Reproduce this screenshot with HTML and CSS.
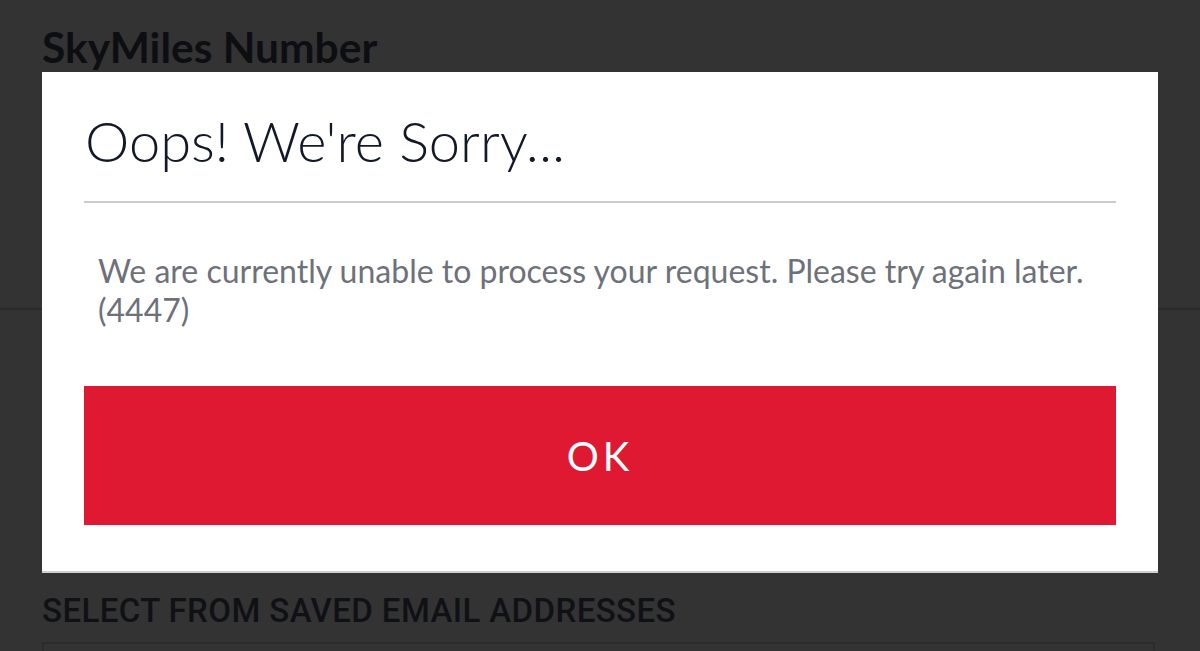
FILE: index.html
```html
<!DOCTYPE html>
<html lang="en">
<head>
    <meta charset="UTF-8">
    <meta name="viewport" content="width=device-width, initial-scale=1.0">
    <title>SkyMiles Number</title>
    <link rel="stylesheet" href="styles.css">
</head>
<body>
    <div class="page">
        <section class="field-block">
            <h2 class="field-title">SkyMiles Number</h2>
        </section>
        <section class="email-block">
            <h3 class="section-label">SELECT FROM SAVED EMAIL ADDRESSES</h3>
            <div class="select-box"></div>
        </section>
    </div>

    <!-- Error dialog shown over the dimmed page -->
    <div class="modal" role="alertdialog">
        <h1 class="modal-title">Oops! We're Sorry...</h1>
        <p class="modal-text">We are currently unable to process your request. Please try again later. (4447)</p>
        <button class="modal-ok">OK</button>
    </div>
</body>
</html>
```

FILE: styles.css
```css
html, body {
    margin: 0;
    height: 100%;
    overflow: hidden;
}
body {
    background-color: #333333;
    font-family: Lato, "Open Sans", Arial, sans-serif;
}
.page {
    display: flex;
    flex-direction: column;
}
.field-block {
    height: 310px;
    border-bottom: 2px solid #2a2a2a;
    box-sizing: border-box;
    padding: 21px 42px 0;
}
.field-title {
    margin: 0;
    font-size: 42.5px;
    font-weight: 700;
    color: #0d0e12;
    line-height: 1.2;
}
.email-block {
    padding: 284px 45px 0 42px;
}
.section-label {
    margin: 0;
    font-family: Roboto, Arial, sans-serif;
    font-size: 33px;
    font-weight: 500;
    letter-spacing: 0.4px;
    color: #101115;
    line-height: 1;
}
.select-box {
    margin-top: 15px;
    height: 8px;
    border: 2px solid #2c2c2c;
    border-bottom: none;
}
.modal {
    position: absolute;
    top: 72px;
    left: 42px;
    width: 1116px;
    height: 501px;
    box-sizing: border-box;
    padding: 0 42px 0 42px;
    background-color: #ffffff;
    border-bottom: 2px solid #cfcfcf;
}
.modal-title {
    margin: 0;
    padding: 35px 0 27px 1px;
    font-size: 56px;
    font-weight: 300;
    color: #111827;
    line-height: 1.2;
    border-bottom: 2px solid #cccccc;
}
.modal-text {
    margin: 0;
    padding: 48px 14px 0;
    font-size: 32px;
    line-height: 39px;
    color: #6d717a;
}
.modal-ok {
    display: block;
    width: 100%;
    height: 139px;
    margin-top: 57px;
    border: none;
    background-color: #e01933;
    color: #ffffff;
    font-family: Lato, Arial, sans-serif;
    font-size: 40px;
    letter-spacing: 4px;
}
```
